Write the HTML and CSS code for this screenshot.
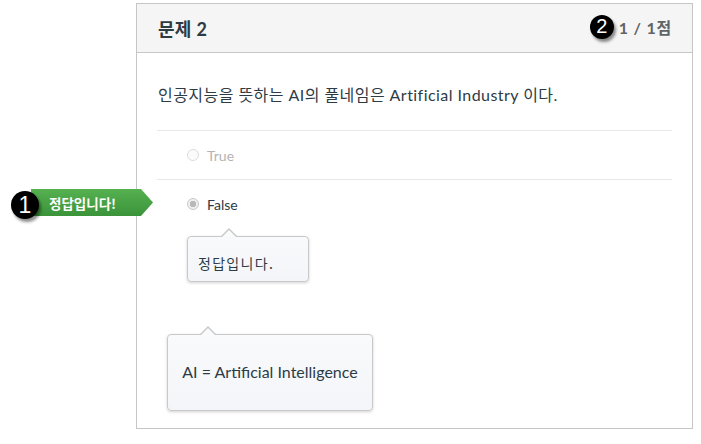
FILE: index.html
```html
<!DOCTYPE html>
<html lang="ko">
<head>
<meta charset="utf-8">
<link rel="stylesheet" href="styles.css">
</head>
<body>
<div class="page">
  <div class="card">
    <div class="card-header">
      <h2 class="title">문제 2</h2>
      <div class="score"><span class="num-badge num-two">2</span><span class="score-text">1 / 1점</span></div>
    </div>
    <div class="card-body">
      <p class="question">인공지능을 뜻하는 AI의 풀네임은 Artificial Industry 이다.</p>
      <div class="option">
        <span class="radio"></span><span class="opt-label muted">True</span>
      </div>
      <div class="option option-selected">
        <span class="radio radio-checked"></span><span class="opt-label">False</span>
      </div>
      <div class="tip tip-small">정답입니다.</div>
      <div class="tip tip-large">AI = Artificial Intelligence</div>
    </div>
  </div>
  <div class="flag-wrap">
    <span class="num-badge num-one">1</span>
    <span class="flag">정답입니다!</span>
  </div>
</div>
</body>
</html>
```

FILE: styles.css
```css
* { box-sizing: border-box; }
html, body { margin: 0; padding: 0; background: #fff; }
body {
  font-family: Lato, "Noto Sans CJK KR", sans-serif;
  color: #333;
}
.page {
  position: relative;
  padding: 3px 0 0 136px;
}
.card {
  width: 557px;
  height: 426px;
  border: 1px solid #c6c6c6;
  background: #fff;
}
.card-header {
  height: 49px;
  background: #f5f5f5;
  border-bottom: 1px solid #c6c6c6;
  display: flex;
  align-items: center;
  justify-content: space-between;
  padding: 0 20px 0 21px;
}
.title {
  margin: 0;
  font-size: 18px;
  font-weight: 700;
  color: #2d3b45;
  letter-spacing: 0.3px;
}
.score {
  display: flex;
  align-items: center;
  gap: 5px;
  margin-top: -3px;
}
.score-text {
  font-size: 16px;
  font-weight: 700;
  color: #5f6468;
  letter-spacing: 0.8px;
}
.num-badge {
  display: inline-flex;
  align-items: center;
  justify-content: center;
  border-radius: 50%;
  background: #000;
  color: #fff;
  font-family: "Liberation Sans", Arial, sans-serif;
  box-shadow: 2px 3px 3px rgba(0,0,0,0.45);
}
.num-two {
  width: 24px;
  height: 24px;
  font-size: 20px;
}
.card-body {
  padding: 0 20px;
}
.question {
  margin: 0;
  padding: 31px 0 24px 1px;
  font-size: 16px;
  letter-spacing: 0.45px;
  line-height: 22px;
  color: #2d3b45;
}
.option {
  height: 49px;
  border-top: 1px solid #e8e8e8;
  display: flex;
  align-items: center;
  padding-left: 30px;
  gap: 8px;
}
.radio {
  width: 12px;
  height: 12px;
  border-radius: 50%;
  border: 1px solid #dcdcdc;
  background: #fbfbfb;
}
.radio-checked {
  border-color: #c8c8c8;
  background: radial-gradient(circle, #b9b9b9 0, #b9b9b9 3px, #f0f0f0 3.5px);
}
.opt-label {
  font-size: 14px;
  color: #2d3b45;
}
.muted { color: #b3b3b3; }
.tip {
  position: relative;
  background: linear-gradient(#f9fafc, #f3f5f8);
  border: 1px solid #c9c9c9;
  border-radius: 4px;
  box-shadow: 0 1px 3px rgba(0,0,0,0.18);
  color: #2d3b45;
}
.tip::before, .tip::after {
  content: "";
  position: absolute;
  width: 0;
  height: 0;
  border-style: solid;
}
.tip::before {
  border-width: 0 9px 9px 9px;
  border-color: transparent transparent #c9c9c9 transparent;
  top: -9px;
}
.tip::after {
  border-width: 0 8px 8px 8px;
  border-color: transparent transparent #f9fafc transparent;
  top: -7px;
}
.tip-small {
  margin: 8px 0 0 30px;
  width: 122px;
  height: 46px;
  padding: 17px 0 0 10px;
  font-size: 14px;
  letter-spacing: 1.3px;
  font-family: "Noto Sans CJK KR", sans-serif;
  line-height: 18px;
}
.tip-small::before { left: 32px; }
.tip-small::after { left: 33px; }
.tip-large {
  margin: 52px 0 0 10px;
  width: 206px;
  height: 77px;
  display: flex;
  align-items: center;
  justify-content: center;
  font-size: 16px;
  padding-bottom: 2px;
}
.tip-large::before { left: 31px; }
.tip-large::after { left: 32px; }
.flag-wrap {
  position: absolute;
  left: 11px;
  top: 186px;
  display: flex;
  align-items: center;
}
.num-one {
  position: relative;
  z-index: 2;
  width: 28px;
  height: 28px;
  font-size: 23px;
  margin-top: 5px;
}
.flag {
  margin-left: -8px;
  height: 27px;
  width: 122px;
  padding-left: 18px;
  display: flex;
  align-items: center;
  color: #fff;
  font-weight: 700;
  font-size: 13.5px;
  font-family: "Noto Sans CJK KR", sans-serif;
  background: linear-gradient(#55b150, #3b933a);
  clip-path: polygon(0 0, 110px 0, 122px 50%, 110px 100%, 0 100%);
}
```
